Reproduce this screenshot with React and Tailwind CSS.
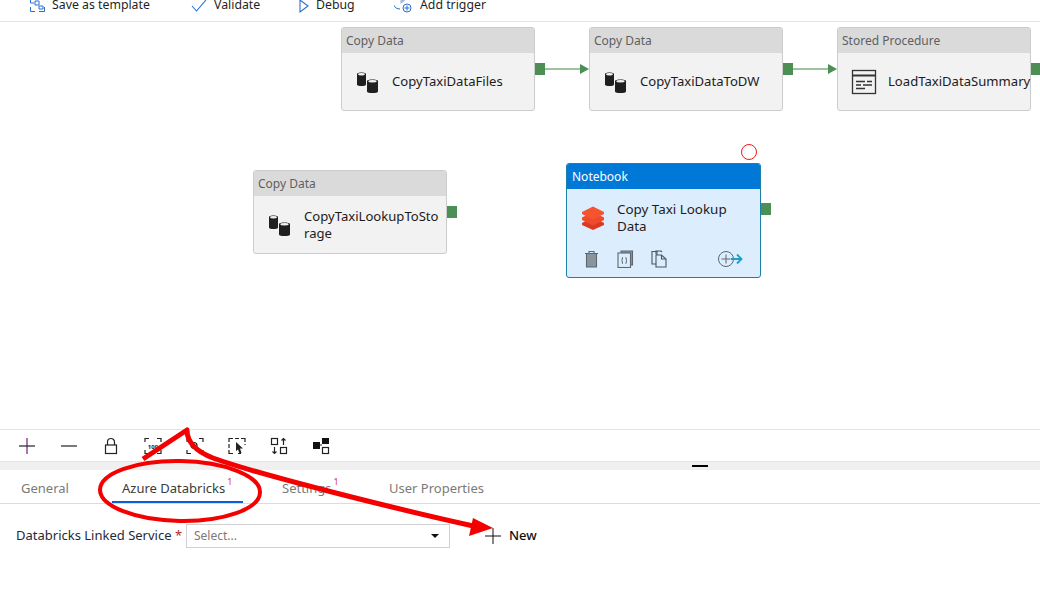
const font = { fontFamily: '"Noto Sans", sans-serif' };

const Cylinders = () => (
  <svg width="24" height="24" viewBox="0 0 24 24" className="shrink-0">
    <path d="M1 4C1 2 10 2 10 4V14.5C10 16.5 1 16.5 1 14.5Z" fill="#1f1f1f" />
    <ellipse cx="5.5" cy="4.2" rx="3.4" ry="1.2" fill="#f2f2f2" />
    <path d="M11 11C11 9 22 9 22 11V21.5C22 23.5 11 23.5 11 21.5Z" fill="#1f1f1f" />
    <ellipse cx="16.5" cy="11.2" rx="4.2" ry="1.2" fill="#f2f2f2" />
  </svg>
);

const ProcIcon = () => (
  <svg width="26" height="26" viewBox="0 0 26 26" fill="none" stroke="#333" strokeWidth="1.3" className="shrink-0">
    <rect x="1.5" y="1.5" width="23" height="23" />
    <path d="M1.5 6.5H24.5" strokeWidth="2" />
    <path d="M5 12.5H14M16 12.5H21M5 16H10M12 16H21M5 19.5H14" />
  </svg>
);

const BricksIcon = () => (
  <svg width="24" height="24" viewBox="0 0 24 24" className="shrink-0">
    <path d="M12 11L1 17V19L12 24L23 19V17Z" fill="#d93a22" />
    <path d="M12 6L1 11.5V14L12 19.5L23 14V11.5Z" fill="#f04a2c" />
    <path d="M12 0.5L1 6V8L12 13.5L23 8V6Z" fill="#f4552f" />
  </svg>
);

const Port = ({ className }) => (
  <span className={`absolute w-[10px] h-[12px] bg-[#4c8f55] ${className}`} />
);

const Node = ({ kind, name, icon, className, nameClass = "whitespace-nowrap" }) => (
  <div className={`absolute w-[194px] h-[84px] rounded-[3px] border border-[#cccccc] bg-[#f2f2f2] ${className}`}>
    <div className="h-[25px] bg-[#dadada] rounded-t-[2px] pl-[4px] text-[12px] leading-[25px] text-[#5f5f5f]">{kind}</div>
    <div className="h-[57px] flex items-center pl-[13px] gap-[12px]">
      <span className="w-[25px] flex justify-center shrink-0">{icon}</span>
      <span className={`text-[13.1px] leading-[17px] text-[#1c1c1c] ${nameClass}`}>{name}</span>
    </div>
  </div>
);

const Edge = ({ className }) => (
  <div className={`absolute w-[44px] flex items-center ${className}`}>
    <span className="flex-1 h-[2px] bg-[#9cc4a2]" />
    <span className="w-0 h-0 border-y-[5px] border-y-transparent border-l-[9px] border-l-[#4c8f55]" />
  </div>
);

const TopItem = ({ icon, label, className }) => (
  <div className={`flex items-center gap-[7px] ${className}`}>
    {icon}
    <span className="text-[12.3px] text-[#1f1f1f]">{label}</span>
  </div>
);

const Tool = ({ children }) => (
  <svg width="18" height="18" viewBox="0 0 18 18" fill="none" stroke="#222" strokeWidth="1.2" className="shrink-0">
    {children}
  </svg>
);

const Tab = ({ label, badge, active, className }) => (
  <div className={`h-full flex items-center pt-[5px] ${className}`}>
    <span className={`relative text-[13px] ${active ? "text-[#3b3b3b]" : "text-[#7a7a7a]"}`}>
      {label}
      {badge && <span className="absolute left-full ml-[2px] top-[-2px] text-[9px] leading-[10px] text-[#e0324b]">1</span>}
    </span>
  </div>
);

export default function App() {
  return (
    <div className="relative w-[1040px] h-[589px] overflow-hidden bg-white" style={font}>
      {/* Top toolbar, cut off by the crop */}
      <div className="h-[22px] border-b border-[#e3e3e3] flex items-center pb-[10px] pl-[30px] overflow-hidden">
        <TopItem
          className="w-[161px]"
          label="Save as template"
          icon={
            <svg width="15" height="15" viewBox="0 0 15 15" fill="none" stroke="#2a6fd0" strokeWidth="1">
              <path d="M.5 1V5H4M.5 9V13.5H5M14.5 9V13.5H9M5 3H9V7H5ZM9 8H13V11H9Z" />
            </svg>
          }
        />
        <TopItem
          className="w-[108px]"
          label="Validate"
          icon={
            <svg width="16" height="14" viewBox="0 0 16 14" fill="none" stroke="#2a6fd0" strokeWidth="1.1">
              <path d="M1 7L5.5 12L15 1" />
            </svg>
          }
        />
        <TopItem
          className="w-[95px]"
          label="Debug"
          icon={
            <svg width="10" height="14" viewBox="0 0 10 14" fill="none" stroke="#2a6fd0" strokeWidth="1.1">
              <path d="M1 1V13L9 7Z" />
            </svg>
          }
        />
        <TopItem
          label="Add trigger"
          icon={
            <svg width="19" height="19" viewBox="0 0 19 19" fill="none" stroke="#2a6fd0" strokeWidth="1">
              <path d="M9 1A6.5 6.5 0 1 0 6 13" />
              <path d="M6.5 1V8L11 4.5Z" fill="#9db9e6" stroke="none" />
              <circle cx="13" cy="12" r="4" />
              <path d="M13 9.5V14.5M10.5 12H15.5" />
            </svg>
          }
        />
      </div>

      {/* Pipeline canvas */}
      <div className="relative h-[407px]">
        <Node className="left-[341px] top-[5px]" kind="Copy Data" name="CopyTaxiDataFiles" icon={<Cylinders />} />
        <Port className="left-[535px] top-[41px]" />
        <Edge className="left-[545px] top-[42px]" />
        <Node className="left-[589px] top-[5px]" kind="Copy Data" name="CopyTaxiDataToDW" icon={<Cylinders />} />
        <Port className="left-[783px] top-[41px]" />
        <Edge className="left-[793px] top-[42px]" />
        <Node className="left-[837px] top-[5px]" kind="Stored Procedure" name="LoadTaxiDataSummary" icon={<ProcIcon />} />
        <Port className="left-[1031px] top-[41px]" />
        <Node
          className="left-[253px] top-[148px]"
          kind="Copy Data"
          name="CopyTaxiLookupToStorage"
          icon={<Cylinders />}
          nameClass="w-[138px] break-all"
        />
        <Port className="left-[447px] top-[184px]" />

        <span className="absolute left-[741px] top-[122px] w-[16px] h-[16px] rounded-full border-[1.5px] border-[#f01818]" />

        {/* Selected notebook activity */}
        <div className="absolute left-[566px] top-[141px] w-[195px] h-[115px] rounded-[3px] border border-[#1c7fa6] bg-[#dcedfd]">
          <div className="h-[25px] bg-[#0078d7] rounded-t-[2px] pl-[5px] text-[12px] leading-[25px] text-white">Notebook</div>
          <div className="h-[58px] flex items-center pl-[14px] gap-[12px]">
            <BricksIcon />
            <span className="text-[13.4px] leading-[17px] text-[#1c1c1c] w-[125px]">Copy Taxi Lookup Data</span>
          </div>
          <div className="flex items-center pl-[17px] h-[24px]">
            <svg width="15" height="18" viewBox="0 0 15 18" fill="none" stroke="#5c6770" strokeWidth="1.1">
              <path d="M1 3.5H14M5 3.5V1.5H10V3.5" />
              <path d="M2.5 3.5V17H12.5V3.5Z" fill="#8a949c" />
            </svg>
            <svg width="17" height="18" viewBox="0 0 17 18" fill="none" stroke="#5c6770" strokeWidth="1.1" className="ml-[18px]">
              <path d="M4 2.5V1H15.5V15H14" fill="#8a949c" />
              <rect x="1" y="3" width="12.5" height="14.5" fill="#dcedfd" />
              <path d="M6 7.5C4.5 7.5 6 10.5 4.5 10.5C6 10.5 4.5 13.5 6 13.5M8.5 7.5C10 7.5 8.5 10.5 10 10.5C8.5 10.5 10 13.5 8.5 13.5" />
            </svg>
            <svg width="16" height="18" viewBox="0 0 16 18" fill="none" stroke="#4b565e" strokeWidth="1.1" className="ml-[17px]">
              <path d="M5 4V1H10L11 2" />
              <path d="M1 1.5H6V14H1Z" />
              <path d="M5 5H10.5L15 9V17H5Z" fill="#dcedfd" />
              <path d="M10.5 5V9H15" />
            </svg>
            <svg width="26" height="18" viewBox="0 0 26 18" fill="none" className="ml-[50px]">
              <circle cx="9" cy="9" r="7.5" stroke="#5c6770" strokeWidth="1" />
              <path d="M9 4.5V13.5M4.5 9H13.5" stroke="#5c6770" strokeWidth="1" />
              <path d="M14 9H24M20 4.5L24.5 9L20 13.5" stroke="#1d9ccd" strokeWidth="1.8" />
            </svg>
          </div>
          <Port className="left-full ml-[1px] top-[39px]" />
        </div>
      </div>

      {/* Canvas toolbar */}
      <div className="h-[33px] border-y border-[#e3e3e3] flex items-center pl-[18px] gap-[24px]">
        <Tool>
          <path d="M9 1V17" stroke="#7a1b7a" />
          <path d="M1 9H17" />
        </Tool>
        <Tool>
          <path d="M1 9H17" />
        </Tool>
        <Tool>
          <path d="M5.5 8V5A3.5 3.5 0 0 1 12.5 5V8" />
          <rect x="3.5" y="8" width="11" height="8.5" />
        </Tool>
        <Tool>
          <path d="M1 5V1.5H5M13 1.5H17V5M1 13V16.5H5M13 16.5H17V13" />
          <text x="9" y="11.5" textAnchor="middle" fontSize="6" fontWeight="700" fill="#222" stroke="none">100</text>
        </Tool>
        <Tool>
          <path d="M1 5V1.5H5M13 1.5H17V5M1 13V16.5H5M13 16.5H17V13" />
          <circle cx="8" cy="8.5" r="3" />
          <path d="M10 11L12 13" />
        </Tool>
        <Tool>
          <path d="M1 5V1.5H5M7 1.5H11M13 1.5H17V5M1 7V11M1 13V16.5H5M13 16.5H10M17 7V8" />
          <path d="M8 5L15 11.5H12L13.5 16L11.5 16.5L10 12.5L8 14Z" fill="#222" stroke="none" />
        </Tool>
        <Tool>
          <rect x="1.5" y="1.5" width="6" height="6" />
          <rect x="10.5" y="10.5" width="6" height="6" />
          <path d="M13.5 8V1.5M11.5 3.5L13.5 1.5L15.5 3.5M4.5 10V16.5M2.5 14.5L4.5 16.5L6.5 14.5" />
        </Tool>
        <Tool>
          <rect x="1" y="5" width="7" height="7" fill="#111" stroke="none" />
          <rect x="10" y="1" width="7" height="6" fill="#111" stroke="none" />
          <rect x="10.5" y="10.5" width="6" height="6" />
          <path d="M8 8H10" />
        </Tool>
      </div>

      {/* Splitter */}
      <div className="h-[8px] bg-[#f0f0f0] pl-[692px] pt-[3px]">
        <span className="block w-[16px] h-[2px] bg-black" />
      </div>

      {/* Tabs */}
      <div className="h-[34px] border-b border-[#dcdcdc] flex pl-[21px] relative">
        <Tab className="w-[101px]" label="General" />
        <Tab className="w-[160px]" label="Azure Databricks" badge active />
        <Tab className="w-[107px]" label="Settings" badge />
        <Tab label="User Properties" />
        <span className="absolute left-[112px] bottom-0 w-[131px] h-[2px] bg-[#0a5fd6]" />
      </div>

      {/* Linked service form */}
      <div className="flex items-center pl-[16px] pt-[20px]">
        <span className="text-[13px] text-[#1f2a38] w-[170px] whitespace-nowrap">
          Databricks Linked Service <span className="text-[#b3262e]">*</span>
        </span>
        <div className="w-[264px] h-[24px] border border-[#d0d0d0] flex items-center justify-between pl-[7px] pr-[10px]">
          <span className="text-[12px] text-[#7a7a7a]">Select...</span>
          <span className="w-0 h-0 border-x-[4px] border-x-transparent border-t-[4px] border-t-[#111]" />
        </div>
        <svg width="16" height="16" viewBox="0 0 16 16" stroke="#111" strokeWidth="1" className="ml-[35px]">
          <path d="M8 0V16M0 8H16" />
        </svg>
        <span className="ml-[8px] text-[13px] font-medium text-[#111]">New</span>
      </div>

      {/* Hand-drawn annotations on top of the screenshot */}
      <svg width="1040" height="589" viewBox="0 0 1040 589" fill="none" className="absolute inset-0 pointer-events-none">
        <ellipse cx="180" cy="491" rx="80" ry="30" stroke="#f40000" strokeWidth="4" transform="rotate(1 180 491)" />
        <path
          d="M143 459L187 430C187 442 195 451 213 458C260 475 400 510 478 527"
          stroke="#f40000"
          strokeWidth="5"
          strokeLinejoin="round"
        />
        <path d="M473 518L493 528L469 536Z" fill="#f40000" />
      </svg>
    </div>
  );
}
